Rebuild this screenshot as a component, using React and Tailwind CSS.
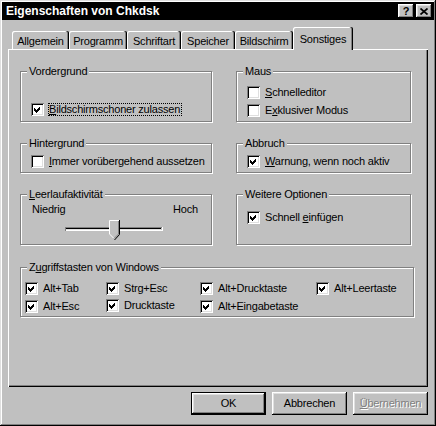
import React from "react";

const sunkenBox =
  "shadow-[inset_1px_1px_#808080,inset_-1px_-1px_#fff,inset_2px_2px_#000,inset_-2px_-2px_#dfdfdf]";
const raised =
  "shadow-[inset_-1px_-1px_#000,inset_1px_1px_#fff,inset_-2px_-2px_#808080,inset_2px_2px_#dfdfdf]";

function Check({ checked }) {
  return (
    <span className={`block w-[13px] h-[13px] shrink-0 bg-white ${sunkenBox}`}>
      {checked && (
        <svg width="13" height="13" className="block">
          <polygon points="3,5 5,7 9,3 9,6 5,10 3,8" fill="#000" shapeRendering="crispEdges" />
        </svg>
      )}
    </span>
  );
}

function CheckItem({ checked, children, className = "" }) {
  return (
    <div className={`flex items-center gap-[5px] ${className}`}>
      <Check checked={checked} />
      <span className="whitespace-nowrap">{children}</span>
    </div>
  );
}

function Group({ title, className = "", children }) {
  return (
    <div
      className={`relative border border-[#808080] shadow-[1px_1px_0_#fff,inset_1px_1px_0_#fff] ${className}`}
    >
      <span className="absolute left-[6px] top-[-7px] px-[2px] bg-[#c0c0c0] whitespace-nowrap">
        {title}
      </span>
      {children}
    </div>
  );
}

function Btn({ children, def, disabled }) {
  return (
    <div
      className={`w-[75px] h-[23px] bg-[#c0c0c0] flex items-center justify-center ${
        def ? "border border-black " : ""
      }${raised} ${disabled ? "text-[#808080] [text-shadow:1px_1px_0_#fff]" : ""}`}
    >
      {children}
    </div>
  );
}

export default function App() {
  return (
    <div className="w-[436px] h-[426px] bg-[#c0c0c0] p-[2px] flex flex-col text-[11px] leading-[13px] text-black font-['Liberation_Sans',Arial,sans-serif] tracking-[-0.2px] shadow-[inset_-1px_-1px_#000,inset_1px_1px_#dfdfdf,inset_-2px_-2px_#808080,inset_2px_2px_#fff]">
      {/* Title bar */}
      <div className="h-[18px] bg-black flex items-center pl-[4px] pr-[2px] shrink-0">
        <span className="text-white font-bold text-[12px] tracking-normal flex-1">
          Eigenschaften von Chkdsk
        </span>
        <div className={`w-[16px] h-[14px] bg-[#c0c0c0] flex items-center justify-center ${raised}`}>
          <span className="font-bold text-[11px] leading-none tracking-normal text-black">?</span>
        </div>
        <div className={`ml-[2px] w-[16px] h-[14px] bg-[#c0c0c0] flex items-center justify-center ${raised}`}>
          <svg width="8" height="7" className="block">
            <path d="M0.5 0.5 L7.5 6.5 M7.5 0.5 L0.5 6.5" stroke="#000" strokeWidth="1.7" />
          </svg>
        </div>
      </div>

      {/* Tabs */}
      <div className="mt-[7px] ml-[10px] h-[22px] flex items-end relative z-10 shrink-0">
        <div className="w-[57px] h-[18px] pt-[4px] text-center rounded-tl-[2px] rounded-tr-[2px] shadow-[inset_-1px_0_#000,inset_-2px_0_#808080,inset_1px_1px_#fff]">Allgemein</div>
        <div className="w-[58px] h-[18px] pt-[4px] text-center rounded-tl-[2px] rounded-tr-[2px] shadow-[inset_-1px_0_#000,inset_-2px_0_#808080,inset_1px_1px_#fff]">Programm</div>
        <div className="w-[54px] h-[18px] pt-[4px] text-center rounded-tl-[2px] rounded-tr-[2px] shadow-[inset_-1px_0_#000,inset_-2px_0_#808080,inset_1px_1px_#fff]">Schriftart</div>
        <div className="w-[54px] h-[18px] pt-[4px] text-center rounded-tl-[2px] rounded-tr-[2px] shadow-[inset_-1px_0_#000,inset_-2px_0_#808080,inset_1px_1px_#fff]">Speicher</div>
        <div className="w-[58px] h-[18px] pt-[4px] text-center rounded-tl-[2px] rounded-tr-[2px] shadow-[inset_-1px_0_#000,inset_-2px_0_#808080,inset_1px_1px_#fff]">Bildschirm</div>
        <div className="w-[60px] h-[23px] mb-[-1px] pt-[6px] text-center bg-[#c0c0c0] rounded-tl-[2px] rounded-tr-[2px] shadow-[inset_-1px_0_#000,inset_-2px_0_#808080,inset_1px_1px_#fff]">Sonstiges</div>
      </div>

      {/* Panel */}
      <div className="ml-[6px] w-[420px] h-[338px] shrink-0 pt-[22px] pl-[12px] shadow-[inset_1px_1px_#fff,inset_-1px_-1px_#000,inset_-2px_-2px_#808080]">
        {/* Row 1 */}
        <div className="flex gap-[24px]">
          <Group title="Vordergrund" className="w-[192px] h-[51px] pl-[10px] pt-[31px]">
            <div className="flex items-center gap-[4px]">
              <Check checked />
              <span className="border border-dotted border-black leading-[11px] pr-[1px] whitespace-nowrap">
                <span className="underline">B</span>ildschirmschoner zulassen
              </span>
            </div>
          </Group>
          <Group title="Maus" className="w-[175px] h-[51px] pl-[10px] pt-[14px] flex flex-col gap-[5px]">
            <CheckItem>
              <span className="underline">S</span>chnelleditor
            </CheckItem>
            <CheckItem>
              E<span className="underline">x</span>klusiver Modus
            </CheckItem>
          </Group>
        </div>

        {/* Row 2 */}
        <div className="flex gap-[24px] mt-[21px]">
          <Group title="Hintergrund" className="w-[192px] h-[30px] pl-[10px] pt-[11px]">
            <CheckItem>
              <span className="underline">I</span>mmer vorübergehend aussetzen
            </CheckItem>
          </Group>
          <Group title="Abbruch" className="w-[175px] h-[30px] pl-[10px] pt-[11px]">
            <CheckItem checked>
              <span className="underline">W</span>arnung, wenn noch aktiv
            </CheckItem>
          </Group>
        </div>

        {/* Row 3 */}
        <div className="flex gap-[24px] mt-[21px]">
          <Group
            title={
              <>
                <span className="underline">L</span>eerlaufaktivität
              </>
            }
            className="w-[192px] h-[51px] pl-[11px] pt-[8px]"
          >
            <div className="w-[166px] flex justify-between">
              <span>Niedrig</span>
              <span>Hoch</span>
            </div>
            <svg width="100" height="24" className="block ml-[31px] mt-[2px]">
              <path d="M2 9.5 H99" stroke="#808080" strokeWidth="1" />
              <path d="M3 10.5 H98" stroke="#000" strokeWidth="1" />
              <path d="M3 11.5 H98" stroke="#dfdfdf" strokeWidth="1" />
              <path d="M2 12.5 H100" stroke="#fff" strokeWidth="1" />
              <path d="M2.5 9 V13" stroke="#808080" strokeWidth="1" />
              <path d="M99.5 9 V13" stroke="#fff" strokeWidth="1" />
              <polygon points="46,2 57,2 57,16 51.5,22 46,16" fill="#c0c0c0" />
              <path d="M46.5 16 V2.5 H56" stroke="#fff" strokeWidth="1" fill="none" />
              <path d="M46.5 16 L51 20.5" stroke="#fff" strokeWidth="1" fill="none" />
              <path d="M56.5 2 V16.5 L51.5 22" stroke="#000" strokeWidth="1" fill="none" />
              <path d="M55.5 3 V16 L51 20.5" stroke="#808080" strokeWidth="1" fill="none" />
            </svg>
          </Group>
          <Group title="Weitere Optionen" className="w-[175px] h-[51px] pl-[10px] pt-[16px]">
            <CheckItem checked>
              Schnell <span className="underline">e</span>infügen
            </CheckItem>
          </Group>
        </div>

        {/* Row 4 */}
        <div className="mt-[22px]">
          <Group
            title={
              <>
                Z<span className="underline">u</span>griffstasten von Windows
              </>
            }
            className="w-[394px] h-[50px] pl-[4px] pt-[14px]"
          >
            <div className="grid grid-cols-[81px_94px_116px_auto] gap-y-[5px]">
              <CheckItem checked>Alt+Tab</CheckItem>
              <CheckItem checked>Strg+Esc</CheckItem>
              <CheckItem checked>Alt+Drucktaste</CheckItem>
              <CheckItem checked>Alt+Leertaste</CheckItem>
              <CheckItem checked>Alt+Esc</CheckItem>
              <CheckItem checked className="-mt-[3px]">Drucktaste</CheckItem>
              <CheckItem checked>Alt+Eingabetaste</CheckItem>
            </div>
          </Group>
        </div>
      </div>

      {/* Buttons */}
      <div className="ml-[6px] w-[420px] mt-[5px] flex justify-end gap-[6px]">
        <Btn def>OK</Btn>
        <Btn>Abbrechen</Btn>
        <Btn disabled>
          <span>
            <span className="underline">Ü</span>bernehmen
          </span>
        </Btn>
      </div>
    </div>
  );
}
